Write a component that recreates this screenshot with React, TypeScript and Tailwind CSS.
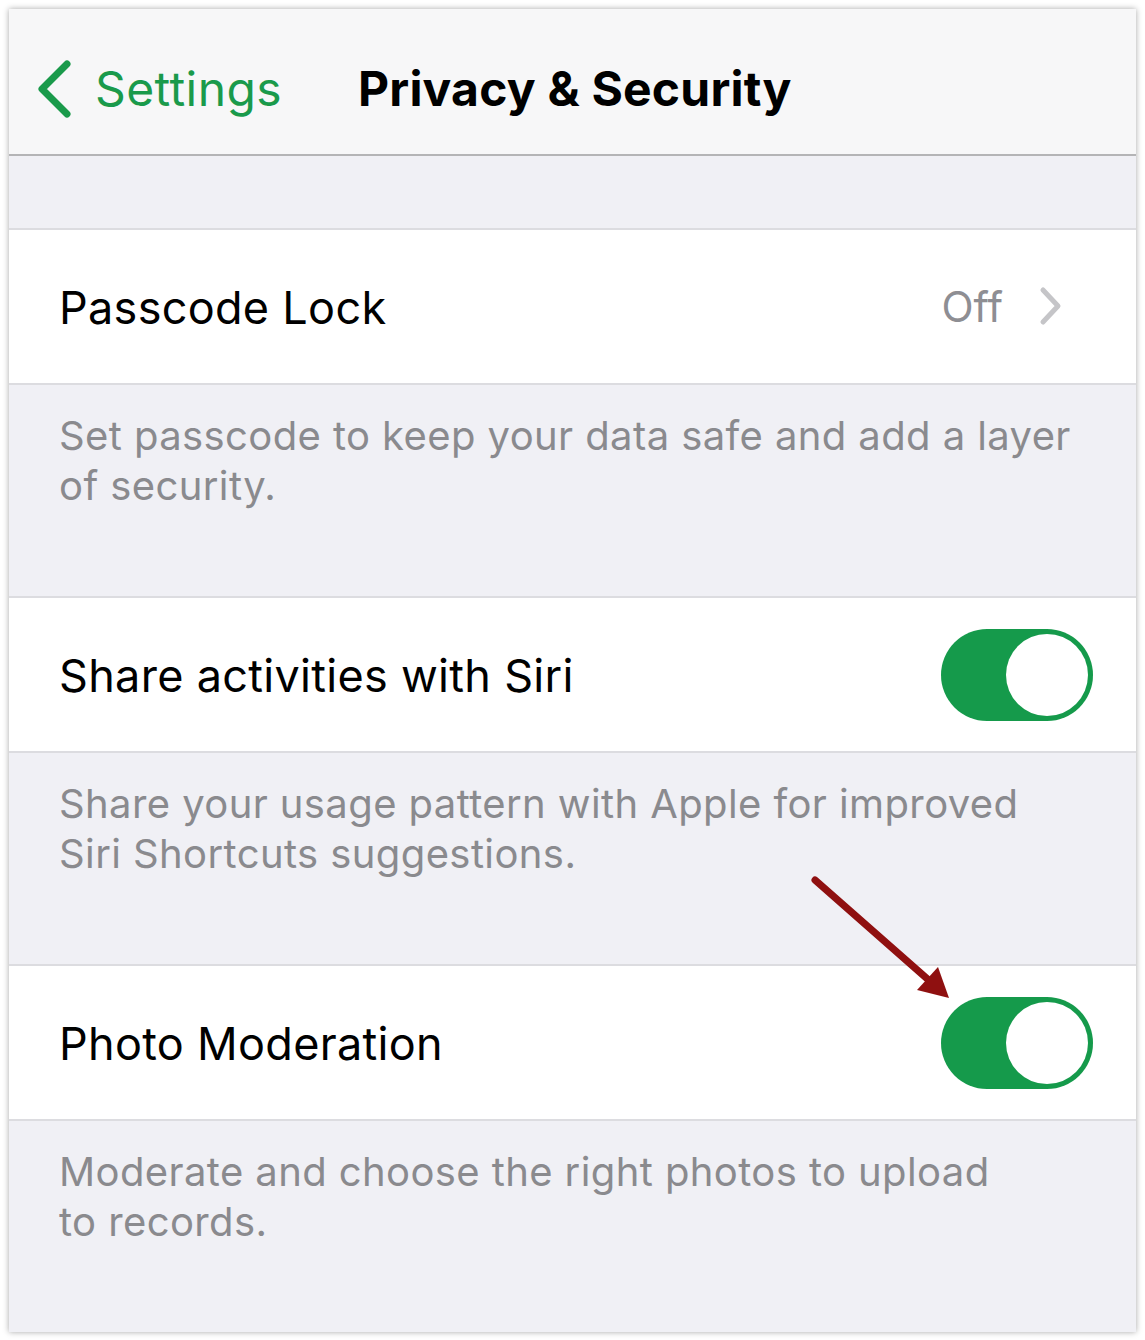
import React from "react";

function Toggle() {
  return (
    <div className="w-[152px] h-[92px] rounded-full bg-[#159a4b] p-[5px] flex justify-end">
      <div className="w-[82px] h-[82px] rounded-full bg-white" />
    </div>
  );
}

function Row({ label, right }: { label: string; right: React.ReactNode }) {
  return (
    <div className="h-[158px] bg-white border-y-2 border-[#dcdce0] flex items-center justify-between pl-[50px] pr-[43px]">
      <span className="text-[45px] text-black tracking-[0.3px] pt-[2px]">{label}</span>
      {right}
    </div>
  );
}

function Note({ children }: { children: React.ReactNode }) {
  return (
    <div className="h-[211px] pl-[50px] pt-[26px] pr-[20px] text-[40px] leading-[50px] text-[#8a8a8e] tracking-[0.4px] whitespace-nowrap">
      {children}
    </div>
  );
}

export default function App() {
  return (
    <div className="min-h-screen bg-white p-[9px]" style={{ fontFamily: "Inter, 'Noto Sans', sans-serif" }}>
      <div className="relative w-[1127px] h-[1323px] bg-[#f0f0f5] shadow-[0_0_6px_rgba(0,0,0,0.35)] flex flex-col overflow-hidden">
        {/* nav bar */}
        <div className="h-[147px] bg-[#f7f7f8] border-b-2 border-[#b4b4b6] flex items-center pl-[27px] pt-[16px]">
          <svg width="36" height="60" viewBox="0 0 36 60" className="mr-[23px]">
            <path d="M31 5 L6 30 L31 55" fill="none" stroke="#1a9a4b" strokeWidth="7" strokeLinecap="round" strokeLinejoin="round" />
          </svg>
          <span className="text-[48px] text-[#1a9a4b] tracking-[0.4px]">Settings</span>
          <span className="ml-[76px] text-[48px] font-bold text-black tracking-[0.2px]">Privacy &amp; Security</span>
        </div>

        <div className="h-[72px]" />

        <Row
          label="Passcode Lock"
          right={
            <div className="flex items-center gap-[36px] pr-[30px]">
              <span className="text-[42px] text-[#8e8e93]">Off</span>
              <svg width="24" height="40" viewBox="0 0 24 40">
                <path d="M4 4 L19 20 L4 36" fill="none" stroke="#c5c5c8" strokeWidth="5" strokeLinecap="round" strokeLinejoin="round" />
              </svg>
            </div>
          }
        />
        <Note>
          Set passcode to keep your data safe and add a layer
          <br />
          of security.
        </Note>

        <Row label="Share activities with Siri" right={<Toggle />} />
        <Note>
          Share your usage pattern with Apple for improved
          <br />
          Siri Shortcuts suggestions.
        </Note>

        <Row label="Photo Moderation" right={<Toggle />} />
        <Note>
          Moderate and choose the right photos to upload
          <br />
          to records.
        </Note>

        {/* annotation arrow */}
        <svg className="absolute left-[795px] top-[862px]" width="160" height="140" viewBox="0 0 160 140">
          <path d="M11 9 L128 112" stroke="#8f1010" strokeWidth="7" strokeLinecap="round" />
          <path d="M145 127 L113 119 L134 96 Z" fill="#8f1010" />
        </svg>
      </div>
    </div>
  );
}
